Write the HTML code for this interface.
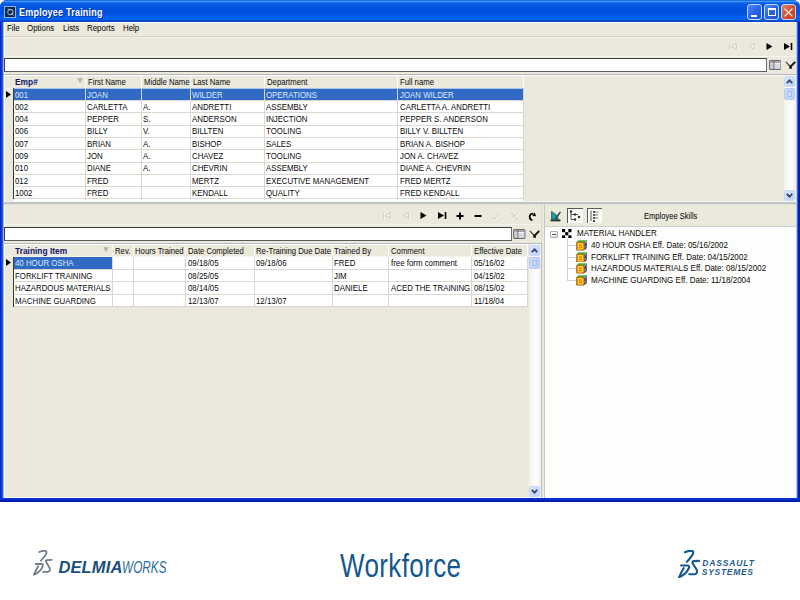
<!DOCTYPE html><html><head><meta charset="utf-8"><style>
*{margin:0;padding:0;box-sizing:border-box}
html,body{width:800px;height:600px;overflow:hidden;background:#fff;font-family:"Liberation Sans",sans-serif;position:relative}
.a{position:absolute}
.t{white-space:nowrap;line-height:1}
.m{font-size:8.5px;color:#000;transform:scaleX(.93);transform-origin:0 0}
.h{font-size:8.6px;color:#0a0a0a;transform:scaleX(.9);transform-origin:0 0}
.hb{font-size:8.4px;color:#12126e;font-weight:bold}
.c{font-size:8.6px;color:#0a0a0a;transform:scaleX(.915);transform-origin:0 0}
.s{color:#dce9fc}
.tr{font-size:8.6px;color:#0a0a0a;transform:scaleX(.932);transform-origin:0 0}
</style></head><body>
<div class="a" style="left:0px;top:0px;width:800px;height:501.7px;background:#0a34d8;border-radius:7px 7px 0 0"></div>
<div class="a" style="left:0px;top:0px;width:800px;height:22px;border-radius:7px 7px 0 0;background:linear-gradient(#0a5fd0 0,#3d95ff 1.5px,#0a5ce8 3px,#0055e0 7px,#0050dc 13px,#0062f0 17px,#0066f5 19px,#0a46cc 21px,#0a40c8 22px)"></div>
<div class="a" style="left:0px;top:22px;width:3.6px;height:476px;background:linear-gradient(90deg,#0018cc 0,#1838d8 1.4px,#2454c8 2.4px,#98c4f0 3.6px)"></div>
<div class="a" style="left:795.8px;top:22px;width:4.2px;height:476px;background:linear-gradient(90deg,#c8e4fc 0,#90b8f0 0.9px,#3058c8 1.6px,#0c24b4 2.4px,#0012a4 4.2px)"></div>
<div class="a" style="left:0px;top:498px;width:800px;height:3.7px;background:linear-gradient(#0a3ae0,#0020b8 60%,#001890)"></div>
<div class="a" style="left:3.6px;top:22px;width:792.2px;height:476px;background:#fbfdff"></div>
<div class="a" style="left:4.5px;top:22.5px;width:791.2px;height:474.6px;background:#ebe9dc"></div>
<div class="a" style="left:4px;top:5.8px;width:12px;height:11.8px;background:#152848;border:1.2px solid #88b4ee"></div>
<svg class="a" style="left:5.2px;top:7px" width="10" height="10" viewBox="0 0 10 10"><circle cx="5.4" cy="5" r="2.6" fill="none" stroke="#8aa4d0" stroke-width="1.1"/><path d="M3 1.5L5 3.5M6.5 6L8.5 8.5" stroke="#b8c8e8" stroke-width="1"/><circle cx="4.5" cy="5.5" r="1" fill="#0a1a50"/></svg>
<div class="a t " style="left:19.3px;top:7.4px;font-size:10.8px;font-weight:bold;color:#fff;letter-spacing:0.25px;transform:scaleX(.835);transform-origin:0 0;text-shadow:1px 1px 0 #0a2a9a">Employee Training</div>
<div class="a" style="left:747.3px;top:4px;width:15px;height:15.5px;border:1px solid #c4d8fc;border-radius:3px;background:linear-gradient(135deg,#4d8cf9,#2a63e8 50%,#1f55d8)"></div>
<div class="a" style="left:764px;top:4px;width:15px;height:15.5px;border:1px solid #c4d8fc;border-radius:3px;background:linear-gradient(135deg,#4d8cf9,#2a63e8 50%,#1f55d8)"></div>
<div class="a" style="left:780.5px;top:4px;width:15px;height:15.5px;border:1px solid #c4d8fc;border-radius:3px;background:linear-gradient(135deg,#e8846a,#d6502e 50%,#c43c18)"></div>
<div class="a" style="left:751px;top:14.5px;width:5.5px;height:2.5px;background:#fff"></div>
<div class="a" style="left:767.5px;top:7.5px;width:8px;height:8px;border:1px solid #fff;border-top-width:2px"></div>
<svg class="a" style="left:782.6px;top:6.6px" width="11" height="11" viewBox="0 0 11 11"><path d="M1.6 1.6L9.4 9.4M9.4 1.6L1.6 9.4" stroke="#fff" stroke-width="1.3"/></svg>
<div class="a t m" style="left:7px;top:24px;">File</div>
<div class="a t m" style="left:27px;top:24px;">Options</div>
<div class="a t m" style="left:63px;top:24px;">Lists</div>
<div class="a t m" style="left:87px;top:24px;">Reports</div>
<div class="a t m" style="left:123px;top:24px;">Help</div>
<div class="a" style="left:4px;top:36px;width:791.8px;height:1px;background:#d8d4c4"></div>
<div class="a" style="left:4px;top:37px;width:791.8px;height:1px;background:#f2f0e6"></div>
<div class="a" style="left:4px;top:56px;width:791.8px;height:1px;background:#f4f3ec"></div>
<svg class="a" style="left:729px;top:42.5px" width="10" height="8" viewBox="0 0 10 8"><g fill="none" stroke="#fff" stroke-width="1"><path d="M1.5 1v6.5"/><path d="M8.5 1L3 4.3L8.5 7.5Z"/></g><g fill="none" stroke="#cac8bc" stroke-width="1"><path d="M0.8 0.3v6.5"/><path d="M7.8 0.5L2.3 3.6L7.8 6.8Z"/></g></svg>
<svg class="a" style="left:748px;top:42.5px" width="9" height="8" viewBox="0 0 9 8"><path d="M7.5 1L2 4.3L7.5 7.5Z" fill="none" stroke="#fff" stroke-width="1"/><path d="M6.8 0.5L1.3 3.6L6.8 6.8Z" fill="none" stroke="#cac8bc" stroke-width="1"/></svg>
<svg class="a" style="left:766px;top:42.5px" width="7" height="7" viewBox="0 0 7 7"><path d="M0.5 0L6.5 3.5L0.5 7Z" fill="#000"/></svg>
<svg class="a" style="left:783.5px;top:42.5px" width="9" height="7" viewBox="0 0 9 7"><path d="M0 0L6 3.5L0 7Z" fill="#000"/><path d="M7.5 0v7" stroke="#000" stroke-width="1.6"/></svg>
<div class="a" style="left:4px;top:58px;width:763px;height:14px;background:#fff;border:1px solid #3c3c3c;border-right-color:#6a6a6a;border-bottom-color:#5a5a5a"></div>
<svg class="a" style="left:768.5999999999999px;top:60px" width="12.5" height="10" viewBox="0 0 12.5 10"><rect x="0.6" y="0.6" width="11.3" height="8.8" rx="1" fill="#d4d4d8" stroke="#6c6c72" stroke-width="1.1"/><rect x="1.2" y="1.2" width="10.1" height="1.8" fill="#a4a4aa"/><path d="M5 1v8.4" stroke="#606066" stroke-width="1"/><path d="M5.5 3.6H11.3" stroke="#f4f4f6" stroke-width="1"/><path d="M1.2 5.6H4.5M5.5 6.4H11.3" stroke="#b0b0b6" stroke-width="0.7"/><rect x="5.6" y="4.2" width="5.7" height="4.6" fill="#e0e0e4" opacity="0.7"/></svg>
<svg class="a" style="left:784.5999999999999px;top:61px" width="11" height="8" viewBox="0 0 11 8"><path d="M1 0.8L10 0.8L5.5 5Z" fill="#f2f2f0"/><path d="M0.9 0.9L4.8 5" stroke="#4a4a4a" stroke-width="1.35"/><path d="M10.2 0.8L6.2 5" stroke="#111" stroke-width="1.9"/><rect x="4.3" y="4.3" width="2.6" height="3.5" fill="#111"/></svg>
<div class="a" style="left:4px;top:74px;width:791.8px;height:1px;background:#b4b8bc"></div>
<div class="a" style="left:524px;top:75px;width:271.8px;height:0.8px;background:#f8f8f2"></div>
<div class="a" style="left:5px;top:75px;width:519px;height:13px;background:#ebe9dc;border-top:1px solid #fff"></div>
<div class="a" style="left:5px;top:87.5px;width:519px;height:1px;background:#f4f3ec"></div>
<div class="a" style="left:5px;top:88.5px;width:7.5px;height:112px;background:#ebe9dc"></div>
<div class="a" style="left:12.5px;top:88px;width:1px;height:111px;background:#3a3a3a"></div>
<div class="a" style="left:13.5px;top:88.5px;width:510px;height:112px;background:#fff"></div>
<div class="a" style="left:13.5px;top:88.4px;width:510px;height:11.29px;background:#316ac5"></div>
<div class="a" style="left:13.5px;top:87.9px;width:510px;height:0.8px;background:#a8c4ec"></div>
<div class="a" style="left:13.5px;top:100.09px;width:510px;height:1px;background:#d9d7cf"></div>
<div class="a" style="left:13.5px;top:112.38000000000001px;width:510px;height:1px;background:#d9d7cf"></div>
<div class="a" style="left:13.5px;top:124.67000000000002px;width:510px;height:1px;background:#d9d7cf"></div>
<div class="a" style="left:13.5px;top:136.96px;width:510px;height:1px;background:#d9d7cf"></div>
<div class="a" style="left:13.5px;top:149.25px;width:510px;height:1px;background:#d9d7cf"></div>
<div class="a" style="left:13.5px;top:161.54px;width:510px;height:1px;background:#d9d7cf"></div>
<div class="a" style="left:13.5px;top:173.83px;width:510px;height:1px;background:#d9d7cf"></div>
<div class="a" style="left:13.5px;top:186.12px;width:510px;height:1px;background:#d9d7cf"></div>
<div class="a" style="left:13.5px;top:198.41px;width:510px;height:1px;background:#d9d7cf"></div>
<div class="a" style="left:84.9px;top:88.5px;width:1px;height:111px;background:#d9d7cf"></div>
<div class="a" style="left:84.9px;top:76px;width:1px;height:11.5px;background:#fcfcf8"></div>
<div class="a" style="left:140.9px;top:88.5px;width:1px;height:111px;background:#d9d7cf"></div>
<div class="a" style="left:140.9px;top:76px;width:1px;height:11.5px;background:#fcfcf8"></div>
<div class="a" style="left:189.5px;top:88.5px;width:1px;height:111px;background:#d9d7cf"></div>
<div class="a" style="left:189.5px;top:76px;width:1px;height:11.5px;background:#fcfcf8"></div>
<div class="a" style="left:263.5px;top:88.5px;width:1px;height:111px;background:#d9d7cf"></div>
<div class="a" style="left:263.5px;top:76px;width:1px;height:11.5px;background:#fcfcf8"></div>
<div class="a" style="left:397.1px;top:88.5px;width:1px;height:111px;background:#d9d7cf"></div>
<div class="a" style="left:397.1px;top:76px;width:1px;height:11.5px;background:#fcfcf8"></div>
<div class="a" style="left:522.8px;top:88.5px;width:1px;height:111px;background:#d9d7cf"></div>
<div class="a" style="left:522.8px;top:76px;width:1px;height:11.5px;background:#fcfcf8"></div>
<div class="a t c s" style="left:14.7px;top:90.5px;">001</div>
<div class="a t c s" style="left:87.4px;top:90.5px;">JOAN</div>
<div class="a t c s" style="left:192px;top:90.5px;">WILDER</div>
<div class="a t c s" style="left:266px;top:90.5px;">OPERATIONS</div>
<div class="a t c s" style="left:399.6px;top:90.5px;">JOAN WILDER</div>
<div class="a t c" style="left:14.7px;top:102.78999999999999px;">002</div>
<div class="a t c" style="left:87.4px;top:102.78999999999999px;">CARLETTA</div>
<div class="a t c" style="left:143.4px;top:102.78999999999999px;">A.</div>
<div class="a t c" style="left:192px;top:102.78999999999999px;">ANDRETTI</div>
<div class="a t c" style="left:266px;top:102.78999999999999px;">ASSEMBLY</div>
<div class="a t c" style="left:399.6px;top:102.78999999999999px;">CARLETTA A. ANDRETTI</div>
<div class="a t c" style="left:14.7px;top:115.08px;">004</div>
<div class="a t c" style="left:87.4px;top:115.08px;">PEPPER</div>
<div class="a t c" style="left:143.4px;top:115.08px;">S.</div>
<div class="a t c" style="left:192px;top:115.08px;">ANDERSON</div>
<div class="a t c" style="left:266px;top:115.08px;">INJECTION</div>
<div class="a t c" style="left:399.6px;top:115.08px;">PEPPER S. ANDERSON</div>
<div class="a t c" style="left:14.7px;top:127.37px;">006</div>
<div class="a t c" style="left:87.4px;top:127.37px;">BILLY</div>
<div class="a t c" style="left:143.4px;top:127.37px;">V.</div>
<div class="a t c" style="left:192px;top:127.37px;">BILLTEN</div>
<div class="a t c" style="left:266px;top:127.37px;">TOOLING</div>
<div class="a t c" style="left:399.6px;top:127.37px;">BILLY V. BILLTEN</div>
<div class="a t c" style="left:14.7px;top:139.66px;">007</div>
<div class="a t c" style="left:87.4px;top:139.66px;">BRIAN</div>
<div class="a t c" style="left:143.4px;top:139.66px;">A.</div>
<div class="a t c" style="left:192px;top:139.66px;">BISHOP</div>
<div class="a t c" style="left:266px;top:139.66px;">SALES</div>
<div class="a t c" style="left:399.6px;top:139.66px;">BRIAN A. BISHOP</div>
<div class="a t c" style="left:14.7px;top:151.95px;">009</div>
<div class="a t c" style="left:87.4px;top:151.95px;">JON</div>
<div class="a t c" style="left:143.4px;top:151.95px;">A.</div>
<div class="a t c" style="left:192px;top:151.95px;">CHAVEZ</div>
<div class="a t c" style="left:266px;top:151.95px;">TOOLING</div>
<div class="a t c" style="left:399.6px;top:151.95px;">JON A. CHAVEZ</div>
<div class="a t c" style="left:14.7px;top:164.23999999999998px;">010</div>
<div class="a t c" style="left:87.4px;top:164.23999999999998px;">DIANE</div>
<div class="a t c" style="left:143.4px;top:164.23999999999998px;">A.</div>
<div class="a t c" style="left:192px;top:164.23999999999998px;">CHEVRIN</div>
<div class="a t c" style="left:266px;top:164.23999999999998px;">ASSEMBLY</div>
<div class="a t c" style="left:399.6px;top:164.23999999999998px;">DIANE A. CHEVRIN</div>
<div class="a t c" style="left:14.7px;top:176.53px;">012</div>
<div class="a t c" style="left:87.4px;top:176.53px;">FRED</div>
<div class="a t c" style="left:192px;top:176.53px;">MERTZ</div>
<div class="a t c" style="left:266px;top:176.53px;">EXECUTIVE MANAGEMENT</div>
<div class="a t c" style="left:399.6px;top:176.53px;">FRED MERTZ</div>
<div class="a t c" style="left:14.7px;top:188.82px;">1002</div>
<div class="a t c" style="left:87.4px;top:188.82px;">FRED</div>
<div class="a t c" style="left:192px;top:188.82px;">KENDALL</div>
<div class="a t c" style="left:266px;top:188.82px;">QUALITY</div>
<div class="a t c" style="left:399.6px;top:188.82px;">FRED KENDALL</div>
<div class="a t hb" style="left:15px;top:78px;">Emp#</div>
<svg class="a" style="left:77px;top:78.3px" width="6" height="5.5" viewBox="0 0 6 5.5"><path d="M0.3 0.3H5.7L3 5.2Z" fill="#b0b0aa"/></svg>
<div class="a t h" style="left:87.9px;top:77.9px;">First Name</div>
<div class="a t h" style="left:143.9px;top:77.9px;">Middle Name</div>
<div class="a t h" style="left:192.5px;top:77.9px;">Last Name</div>
<div class="a t h" style="left:266.5px;top:77.9px;">Department</div>
<div class="a t h" style="left:400.1px;top:77.9px;">Full name</div>
<svg class="a" style="left:6px;top:90.5px" width="5" height="7" viewBox="0 0 5 7"><path d="M0 0L5 3.5L0 7Z" fill="#000"/></svg>
<div class="a" style="left:783.5px;top:74.5px;width:12.5px;height:127.0px;background:linear-gradient(90deg,#f3f1ec,#fefefe 60%,#f3f1ec)"></div>
<div class="a" style="left:784.0px;top:75.5px;width:11px;height:11px;background:linear-gradient(135deg,#dbe6fd,#bcd0fa);border:1px solid #c8d8f8;border-radius:2px"></div>
<svg class="a" style="left:786.1px;top:78.7px" width="7" height="5" viewBox="0 0 7 5"><path d="M0.8 4.2L3.5 1.4L6.2 4.2" fill="none" stroke="#34466c" stroke-width="1.8"/></svg>
<div class="a" style="left:784.0px;top:87.5px;width:11px;height:12px;background:linear-gradient(90deg,#cddcfc,#bcd0fa);border:1px solid #b4c8f6;border-radius:2px"></div>
<div class="a" style="left:787.0px;top:90.5px;width:5px;height:6px;background:#cad9fb;border:1px solid #aac0f2"></div>
<div class="a" style="left:784.0px;top:189.5px;width:11px;height:11px;background:linear-gradient(135deg,#dbe6fd,#bcd0fa);border:1px solid #c8d8f8;border-radius:2px"></div>
<svg class="a" style="left:786.1px;top:192.7px" width="7" height="5" viewBox="0 0 7 5"><path d="M0.8 0.8L3.5 3.6L6.2 0.8" fill="none" stroke="#34466c" stroke-width="1.8"/></svg>
<div class="a" style="left:4px;top:200.6px;width:791.8px;height:1px;background:#f6f5ee"></div>
<div class="a" style="left:4px;top:201.8px;width:791.8px;height:1.8px;background:#bcc4c8"></div>
<div class="a" style="left:4px;top:203.6px;width:791.8px;height:1.4px;background:#e4e1d4"></div>
<svg class="a" style="left:383px;top:211.5px" width="10" height="8" viewBox="0 0 10 8"><g fill="none" stroke="#fff" stroke-width="1"><path d="M1.5 1v6.5"/><path d="M8.5 1L3 4.3L8.5 7.5Z"/></g><g fill="none" stroke="#cac8bc" stroke-width="1"><path d="M0.8 0.3v6.5"/><path d="M7.8 0.5L2.3 3.6L7.8 6.8Z"/></g></svg>
<svg class="a" style="left:402px;top:211.5px" width="9" height="8" viewBox="0 0 9 8"><path d="M7.5 1L2 4.3L7.5 7.5Z" fill="none" stroke="#fff" stroke-width="1"/><path d="M6.8 0.5L1.3 3.6L6.8 6.8Z" fill="none" stroke="#cac8bc" stroke-width="1"/></svg>
<svg class="a" style="left:420px;top:211.5px" width="7" height="7" viewBox="0 0 7 7"><path d="M0.5 0L6.5 3.5L0.5 7Z" fill="#000"/></svg>
<svg class="a" style="left:437.5px;top:211.5px" width="9" height="7" viewBox="0 0 9 7"><path d="M0 0L6 3.5L0 7Z" fill="#000"/><path d="M7.5 0v7" stroke="#000" stroke-width="1.6"/></svg>
<svg class="a" style="left:456px;top:211.5px" width="8" height="8" viewBox="0 0 8 8"><path d="M4 0.5v7M0.5 4h7" stroke="#000" stroke-width="2"/></svg>
<svg class="a" style="left:474px;top:211.5px" width="8" height="8" viewBox="0 0 8 8"><path d="M0.5 4h7" stroke="#000" stroke-width="2"/></svg>
<svg class="a" style="left:491px;top:211.5px" width="10" height="9" viewBox="0 0 10 9"><path d="M1.5 6L4 8L9.5 2" fill="none" stroke="#fff" stroke-width="1"/><path d="M0.8 5.3L3.3 7.3L8.8 1.3" fill="none" stroke="#cac8bc" stroke-width="1"/></svg>
<svg class="a" style="left:509.5px;top:211.5px" width="9" height="9" viewBox="0 0 9 9"><path d="M1.5 1.5L8.5 8.5M8.5 1.5L1.5 8.5" stroke="#fff" stroke-width="1"/><path d="M0.8 0.8L7.8 7.8M7.8 0.8L0.8 7.8" stroke="#cac8bc" stroke-width="1"/></svg>
<svg class="a" style="left:527.6px;top:211.5px" width="10" height="10" viewBox="0 0 10 10"><path d="M4.4 8.2A3.4 3.4 0 0 1 4.6 1.5L5.4 1.7" fill="none" stroke="#000" stroke-width="1.7"/><path d="M6.8 0.5L8 4.3L4.3 4.1Z" fill="#000"/></svg>
<div class="a" style="left:4px;top:227px;width:507.5px;height:14px;background:#fff;border:1px solid #3c3c3c;border-right-color:#6a6a6a;border-bottom-color:#5a5a5a"></div>
<svg class="a" style="left:513.0999999999999px;top:229px" width="12.5" height="10" viewBox="0 0 12.5 10"><rect x="0.6" y="0.6" width="11.3" height="8.8" rx="1" fill="#d4d4d8" stroke="#6c6c72" stroke-width="1.1"/><rect x="1.2" y="1.2" width="10.1" height="1.8" fill="#a4a4aa"/><path d="M5 1v8.4" stroke="#606066" stroke-width="1"/><path d="M5.5 3.6H11.3" stroke="#f4f4f6" stroke-width="1"/><path d="M1.2 5.6H4.5M5.5 6.4H11.3" stroke="#b0b0b6" stroke-width="0.7"/><rect x="5.6" y="4.2" width="5.7" height="4.6" fill="#e0e0e4" opacity="0.7"/></svg>
<svg class="a" style="left:529.0999999999999px;top:230px" width="11" height="8" viewBox="0 0 11 8"><path d="M1 0.8L10 0.8L5.5 5Z" fill="#f2f2f0"/><path d="M0.9 0.9L4.8 5" stroke="#4a4a4a" stroke-width="1.35"/><path d="M10.2 0.8L6.2 5" stroke="#111" stroke-width="1.9"/><rect x="4.3" y="4.3" width="2.6" height="3.5" fill="#111"/></svg>
<div class="a" style="left:4px;top:243px;width:537.5px;height:1px;background:#b4b8bc"></div>
<div class="a" style="left:5px;top:244px;width:523px;height:12.5px;background:#ebe9dc;border-top:1px solid #fff"></div>
<div class="a" style="left:5px;top:256px;width:523px;height:0.8px;background:#f4f3ec"></div>
<div class="a" style="left:5px;top:256.5px;width:7.5px;height:50px;background:#ebe9dc"></div>
<div class="a" style="left:12.5px;top:256.5px;width:1px;height:50px;background:#3a3a3a"></div>
<div class="a" style="left:13.5px;top:256.9px;width:514px;height:49.92px;background:#fff"></div>
<div class="a" style="left:13.5px;top:256.9px;width:98.4px;height:11.68px;background:#316ac5"></div>
<div class="a" style="left:13.5px;top:268.78px;width:514px;height:1px;background:#d9d7cf"></div>
<div class="a" style="left:13.5px;top:281.25999999999993px;width:514px;height:1px;background:#d9d7cf"></div>
<div class="a" style="left:13.5px;top:293.73999999999995px;width:514px;height:1px;background:#d9d7cf"></div>
<div class="a" style="left:13.5px;top:306.21999999999997px;width:514px;height:1px;background:#d9d7cf"></div>
<div class="a" style="left:111.9px;top:256.5px;width:1px;height:49.92px;background:#d9d7cf"></div>
<div class="a" style="left:111.9px;top:245px;width:1px;height:11px;background:#fcfcf8"></div>
<div class="a" style="left:132.5px;top:256.5px;width:1px;height:49.92px;background:#d9d7cf"></div>
<div class="a" style="left:132.5px;top:245px;width:1px;height:11px;background:#fcfcf8"></div>
<div class="a" style="left:185.1px;top:256.5px;width:1px;height:49.92px;background:#d9d7cf"></div>
<div class="a" style="left:185.1px;top:245px;width:1px;height:11px;background:#fcfcf8"></div>
<div class="a" style="left:253.5px;top:256.5px;width:1px;height:49.92px;background:#d9d7cf"></div>
<div class="a" style="left:253.5px;top:245px;width:1px;height:11px;background:#fcfcf8"></div>
<div class="a" style="left:331.5px;top:256.5px;width:1px;height:49.92px;background:#d9d7cf"></div>
<div class="a" style="left:331.5px;top:245px;width:1px;height:11px;background:#fcfcf8"></div>
<div class="a" style="left:388.1px;top:256.5px;width:1px;height:49.92px;background:#d9d7cf"></div>
<div class="a" style="left:388.1px;top:245px;width:1px;height:11px;background:#fcfcf8"></div>
<div class="a" style="left:471.1px;top:256.5px;width:1px;height:49.92px;background:#d9d7cf"></div>
<div class="a" style="left:471.1px;top:245px;width:1px;height:11px;background:#fcfcf8"></div>
<div class="a" style="left:526.8px;top:256.5px;width:1px;height:49.92px;background:#d9d7cf"></div>
<div class="a" style="left:526.8px;top:245px;width:1px;height:11px;background:#fcfcf8"></div>
<div class="a t c s" style="left:14.7px;top:259.4px;">40 HOUR OSHA</div>
<div class="a t c" style="left:187.6px;top:259.4px;">09/18/05</div>
<div class="a t c" style="left:256px;top:259.4px;">09/18/06</div>
<div class="a t c" style="left:334px;top:259.4px;">FRED</div>
<div class="a t c" style="left:390.6px;top:259.4px;">free form comment</div>
<div class="a t c" style="left:473.6px;top:259.4px;">05/16/02</div>
<div class="a t c" style="left:14.7px;top:271.88px;">FORKLIFT TRAINING</div>
<div class="a t c" style="left:187.6px;top:271.88px;">08/25/05</div>
<div class="a t c" style="left:334px;top:271.88px;">JIM</div>
<div class="a t c" style="left:473.6px;top:271.88px;">04/15/02</div>
<div class="a t c" style="left:14.7px;top:284.35999999999996px;">HAZARDOUS MATERIALS</div>
<div class="a t c" style="left:187.6px;top:284.35999999999996px;">08/14/05</div>
<div class="a t c" style="left:334px;top:284.35999999999996px;">DANIELE</div>
<div class="a t c" style="left:390.6px;top:284.35999999999996px;">ACED THE TRAINING</div>
<div class="a t c" style="left:473.6px;top:284.35999999999996px;">08/15/02</div>
<div class="a t c" style="left:14.7px;top:296.84px;">MACHINE GUARDING</div>
<div class="a t c" style="left:187.6px;top:296.84px;">12/13/07</div>
<div class="a t c" style="left:256px;top:296.84px;">12/13/07</div>
<div class="a t c" style="left:473.6px;top:296.84px;">11/18/04</div>
<div class="a t hb" style="left:15px;top:247.2px;">Training Item</div>
<svg class="a" style="left:102.8px;top:247.3px" width="6" height="5.5" viewBox="0 0 6 5.5"><path d="M0.3 0.3H5.7L3 5.2Z" fill="#b0b0aa"/></svg>
<div class="a t h" style="left:114.7px;top:246.6px;">Rev.</div>
<div class="a t h" style="left:135.3px;top:246.6px;">Hours Trained</div>
<div class="a t h" style="left:187.9px;top:246.6px;">Date Completed</div>
<div class="a t h" style="left:256.3px;top:246.6px;">Re-Training Due Date</div>
<div class="a t h" style="left:334.3px;top:246.6px;">Trained By</div>
<div class="a t h" style="left:390.90000000000003px;top:246.6px;">Comment</div>
<div class="a t h" style="left:473.90000000000003px;top:246.6px;">Effective Date</div>
<svg class="a" style="left:6px;top:259px" width="5" height="7" viewBox="0 0 5 7"><path d="M0 0L5 3.5L0 7Z" fill="#000"/></svg>
<div class="a" style="left:528.5px;top:244px;width:12.5px;height:253.5px;background:linear-gradient(90deg,#f3f1ec,#fefefe 60%,#f3f1ec)"></div>
<div class="a" style="left:529.0px;top:245px;width:11px;height:11px;background:linear-gradient(135deg,#dbe6fd,#bcd0fa);border:1px solid #c8d8f8;border-radius:2px"></div>
<svg class="a" style="left:531.1px;top:248.2px" width="7" height="5" viewBox="0 0 7 5"><path d="M0.8 4.2L3.5 1.4L6.2 4.2" fill="none" stroke="#34466c" stroke-width="1.8"/></svg>
<div class="a" style="left:529.0px;top:257px;width:11px;height:12px;background:linear-gradient(90deg,#cddcfc,#bcd0fa);border:1px solid #b4c8f6;border-radius:2px"></div>
<div class="a" style="left:532.0px;top:260px;width:5px;height:6px;background:#cad9fb;border:1px solid #aac0f2"></div>
<div class="a" style="left:529.0px;top:485.5px;width:11px;height:11px;background:linear-gradient(135deg,#dbe6fd,#bcd0fa);border:1px solid #c8d8f8;border-radius:2px"></div>
<svg class="a" style="left:531.1px;top:488.7px" width="7" height="5" viewBox="0 0 7 5"><path d="M0.8 0.8L3.5 3.6L6.2 0.8" fill="none" stroke="#34466c" stroke-width="1.8"/></svg>
<div class="a" style="left:540.8px;top:205px;width:1px;height:38px;background:#dcd9cc"></div>
<div class="a" style="left:540.8px;top:243px;width:1px;height:255px;background:#b8bcc0"></div>
<div class="a" style="left:4px;top:223.8px;width:537px;height:1px;background:#f4f2ea"></div>
<div class="a" style="left:543.6px;top:205px;width:1px;height:293px;background:#c9c6ba"></div>
<div class="a" style="left:544.5px;top:205px;width:251.3px;height:21px;background:#ebe9dc"></div>
<div class="a" style="left:544.5px;top:226px;width:251.3px;height:1px;background:#c8d0dc"></div>
<div class="a" style="left:544.5px;top:227px;width:251.3px;height:271px;background:#fdfdfb"></div>
<div class="a t " style="left:644.3px;top:211.6px;font-size:8.6px;color:#000;transform:scaleX(.88);transform-origin:0 0">Employee Skills</div>
<svg class="a" style="left:549.5px;top:209.8px" width="12" height="12" viewBox="0 0 12 12"><path d="M0.5 10.4H10.5" stroke="#2a3430" stroke-width="1.9"/><path d="M1.6 1.4V9.2H8.6L6.2 6.6L7 5.6Z" fill="#18a4a0" stroke="#0a3e3e" stroke-width="0.7"/><path d="M6 8.6L10.4 1.6" stroke="#3a3a3a" stroke-width="1.6"/><path d="M9.4 2.4L10.6 0.6" stroke="#f4f4f4" stroke-width="0.9"/></svg>
<div class="a" style="left:567px;top:208px;width:15.5px;height:14.5px;background:#fbfbf8;border-top:1.5px solid #5a5a56;border-left:1.5px solid #5a5a56"></div>
<svg class="a" style="left:569px;top:210px" width="13" height="12" viewBox="0 0 13 12"><path d="M2 1V9.5H5M2 4.5H5" stroke="#404040" stroke-width="0.9" fill="none"/><circle cx="2" cy="1.5" r="1.2" fill="#333"/><circle cx="6" cy="4.5" r="1.2" fill="#333"/><circle cx="6" cy="9.5" r="1.2" fill="#333"/><path d="M6 4.5H9" stroke="#404040" stroke-width="0.9"/><circle cx="10" cy="7" r="1.3" fill="#333"/></svg>
<div class="a" style="left:587px;top:208px;width:14.5px;height:14.5px;background:#fbfbf8;border-top:1.5px solid #5a5a56;border-left:1.5px solid #5a5a56"></div>
<svg class="a" style="left:589px;top:210px" width="12" height="12" viewBox="0 0 12 12"><path d="M2 0.5V11" stroke="#404040" stroke-width="0.9"/><circle cx="5" cy="2" r="1.1" fill="#333"/><circle cx="5" cy="5" r="1.1" fill="#333"/><circle cx="5" cy="8" r="1.1" fill="#333"/><circle cx="5" cy="11" r="1.1" fill="#333"/><path d="M6 2H9M6 5H9M6 8H9" stroke="#555" stroke-width="0.8"/></svg>
<div class="a" style="left:550px;top:230.5px;width:7.5px;height:7px;border:1px solid #a4b0c0;background:linear-gradient(135deg,#fff,#dcdcd4);border-radius:1px"></div>
<div class="a" style="left:552px;top:233.5px;width:3.5px;height:1.1px;background:#555"></div>
<svg class="a" style="left:562.3px;top:228.8px" width="9.5" height="9.5" viewBox="0 0 9 9"><rect x="0" y="0" width="3" height="3" fill="#000"/><rect x="6" y="0" width="3" height="3" fill="#000"/><rect x="3" y="3" width="3" height="3" fill="#000"/><rect x="0" y="6" width="3" height="3" fill="#000"/><rect x="6" y="6" width="3" height="3" fill="#000"/></svg>
<div class="a t tr" style="left:576.6px;top:229.4px;">MATERIAL HANDLER</div>
<div class="a" style="left:567.2px;top:239px;width:1px;height:41.8px;background:#d0d0d0"></div>
<div class="a" style="left:568px;top:245.0px;width:8px;height:1px;background:#d0d0d0"></div>
<svg class="a" style="left:576px;top:240.2px" width="11" height="10.5" viewBox="0 0 11 10.5"><path d="M0.5 2.3L2.5 0.2H10.8L8.5 2.3Z" fill="#4cb028"/><path d="M8.5 2.3L10.8 0.2V8L8.5 10.2Z" fill="#3038b0"/><rect x="0.3" y="2.3" width="8.2" height="7.9" rx="1" fill="#f07808" stroke="#6a3a10" stroke-width="0.5"/><path d="M2.3 3.6H5.2Q6.8 3.6 6.8 5Q6.8 6 5.8 6.2Q7 6.5 7 7.6Q7 8.9 5.3 8.9H2.3Z" fill="none" stroke="#ffe030" stroke-width="1.1"/><path d="M2.3 6.2H5.5" stroke="#ffe030" stroke-width="0.9"/><circle cx="9.8" cy="2.2" r="0.6" fill="#d8f070"/><circle cx="9.6" cy="6.8" r="0.6" fill="#a8e070"/></svg>
<div class="a t tr" style="left:590.5px;top:241.2px;">40 HOUR OSHA Eff. Date: 05/16/2002</div>
<div class="a" style="left:568px;top:256.59999999999997px;width:8px;height:1px;background:#d0d0d0"></div>
<svg class="a" style="left:576px;top:251.79999999999998px" width="11" height="10.5" viewBox="0 0 11 10.5"><path d="M0.5 2.3L2.5 0.2H10.8L8.5 2.3Z" fill="#4cb028"/><path d="M8.5 2.3L10.8 0.2V8L8.5 10.2Z" fill="#3038b0"/><rect x="0.3" y="2.3" width="8.2" height="7.9" rx="1" fill="#f07808" stroke="#6a3a10" stroke-width="0.5"/><path d="M2.3 3.6H5.2Q6.8 3.6 6.8 5Q6.8 6 5.8 6.2Q7 6.5 7 7.6Q7 8.9 5.3 8.9H2.3Z" fill="none" stroke="#ffe030" stroke-width="1.1"/><path d="M2.3 6.2H5.5" stroke="#ffe030" stroke-width="0.9"/><circle cx="9.8" cy="2.2" r="0.6" fill="#d8f070"/><circle cx="9.6" cy="6.8" r="0.6" fill="#a8e070"/></svg>
<div class="a t tr" style="left:590.5px;top:252.79999999999998px;">FORKLIFT TRAINING Eff. Date: 04/15/2002</div>
<div class="a" style="left:568px;top:268.2px;width:8px;height:1px;background:#d0d0d0"></div>
<svg class="a" style="left:576px;top:263.4px" width="11" height="10.5" viewBox="0 0 11 10.5"><path d="M0.5 2.3L2.5 0.2H10.8L8.5 2.3Z" fill="#4cb028"/><path d="M8.5 2.3L10.8 0.2V8L8.5 10.2Z" fill="#3038b0"/><rect x="0.3" y="2.3" width="8.2" height="7.9" rx="1" fill="#f07808" stroke="#6a3a10" stroke-width="0.5"/><path d="M2.3 3.6H5.2Q6.8 3.6 6.8 5Q6.8 6 5.8 6.2Q7 6.5 7 7.6Q7 8.9 5.3 8.9H2.3Z" fill="none" stroke="#ffe030" stroke-width="1.1"/><path d="M2.3 6.2H5.5" stroke="#ffe030" stroke-width="0.9"/><circle cx="9.8" cy="2.2" r="0.6" fill="#d8f070"/><circle cx="9.6" cy="6.8" r="0.6" fill="#a8e070"/></svg>
<div class="a t tr" style="left:590.5px;top:264.4px;">HAZARDOUS MATERIALS Eff. Date: 08/15/2002</div>
<div class="a" style="left:568px;top:279.8px;width:8px;height:1px;background:#d0d0d0"></div>
<svg class="a" style="left:576px;top:275.0px" width="11" height="10.5" viewBox="0 0 11 10.5"><path d="M0.5 2.3L2.5 0.2H10.8L8.5 2.3Z" fill="#4cb028"/><path d="M8.5 2.3L10.8 0.2V8L8.5 10.2Z" fill="#3038b0"/><rect x="0.3" y="2.3" width="8.2" height="7.9" rx="1" fill="#f07808" stroke="#6a3a10" stroke-width="0.5"/><path d="M2.3 3.6H5.2Q6.8 3.6 6.8 5Q6.8 6 5.8 6.2Q7 6.5 7 7.6Q7 8.9 5.3 8.9H2.3Z" fill="none" stroke="#ffe030" stroke-width="1.1"/><path d="M2.3 6.2H5.5" stroke="#ffe030" stroke-width="0.9"/><circle cx="9.8" cy="2.2" r="0.6" fill="#d8f070"/><circle cx="9.6" cy="6.8" r="0.6" fill="#a8e070"/></svg>
<div class="a t tr" style="left:590.5px;top:276.0px;">MACHINE GUARDING Eff. Date: 11/18/2004</div>
<div class="a t" style="left:339.5px;top:548.7px;font-size:33px;color:#155890;letter-spacing:0.5px;transform:scaleX(0.787);transform-origin:0 0">Workforce</div>
<svg class="a" style="left:33.4px;top:550.3px" width="19.5" height="25.5" viewBox="2.3 2.3 22.6 29.2" preserveAspectRatio="none"><g fill="none" stroke="#6f7d8a" stroke-width="2.1" stroke-linecap="round" stroke-linejoin="round"><path d="M9.5 4.6C12 3.4 15 3 16.8 3.3C18.6 3.7 18.2 5.6 17 7.6C15.5 10 13.5 12.5 11.5 14.5"/><path d="M8.3 21C6.5 24 4.5 28 3.4 30.6C7 29 11.5 25.5 13.3 21.5C14.3 19.5 13.5 18.3 12 18.3L5.5 18.3"/><path d="M24 13.6L18.3 13.8C16.8 14 17 15.5 18 17L21.3 22.3C22.5 24.5 22 27.4 19 27.4L13.9 27.4"/></g></svg>
<div class="a t" style="left:58.4px;top:558.9px;font-size:16.5px;font-weight:bold;font-style:italic;color:#1a4e7e;letter-spacing:0.15px">DELMIA</div>
<div class="a t" style="left:122px;top:558.9px;font-size:16.5px;font-style:italic;color:#2e6c9c;transform:scaleX(0.715);transform-origin:0 0">WORKS</div>
<svg class="a" style="left:677.9px;top:550px" width="21.9" height="28.2" viewBox="2.3 2.3 22.6 29.2" preserveAspectRatio="none"><g fill="none" stroke="#175892" stroke-width="2.2" stroke-linecap="round" stroke-linejoin="round"><path d="M9.5 4.6C12 3.4 15 3 16.8 3.3C18.6 3.7 18.2 5.6 17 7.6C15.5 10 13.5 12.5 11.5 14.5"/><path d="M8.3 21C6.5 24 4.5 28 3.4 30.6C7 29 11.5 25.5 13.3 21.5C14.3 19.5 13.5 18.3 12 18.3L5.5 18.3"/><path d="M24 13.6L18.3 13.8C16.8 14 17 15.5 18 17L21.3 22.3C22.5 24.5 22 27.4 19 27.4L13.9 27.4"/></g></svg>
<div class="a t" style="left:702.3px;top:559px;font-size:8.5px;font-weight:bold;font-style:italic;color:#1e5a92;letter-spacing:0.85px">DASSAULT</div>
<div class="a t" style="left:701.8px;top:567.6px;font-size:8.5px;font-weight:bold;font-style:italic;color:#1e5a92;letter-spacing:0.7px">SYSTEMES</div>
</body></html>
